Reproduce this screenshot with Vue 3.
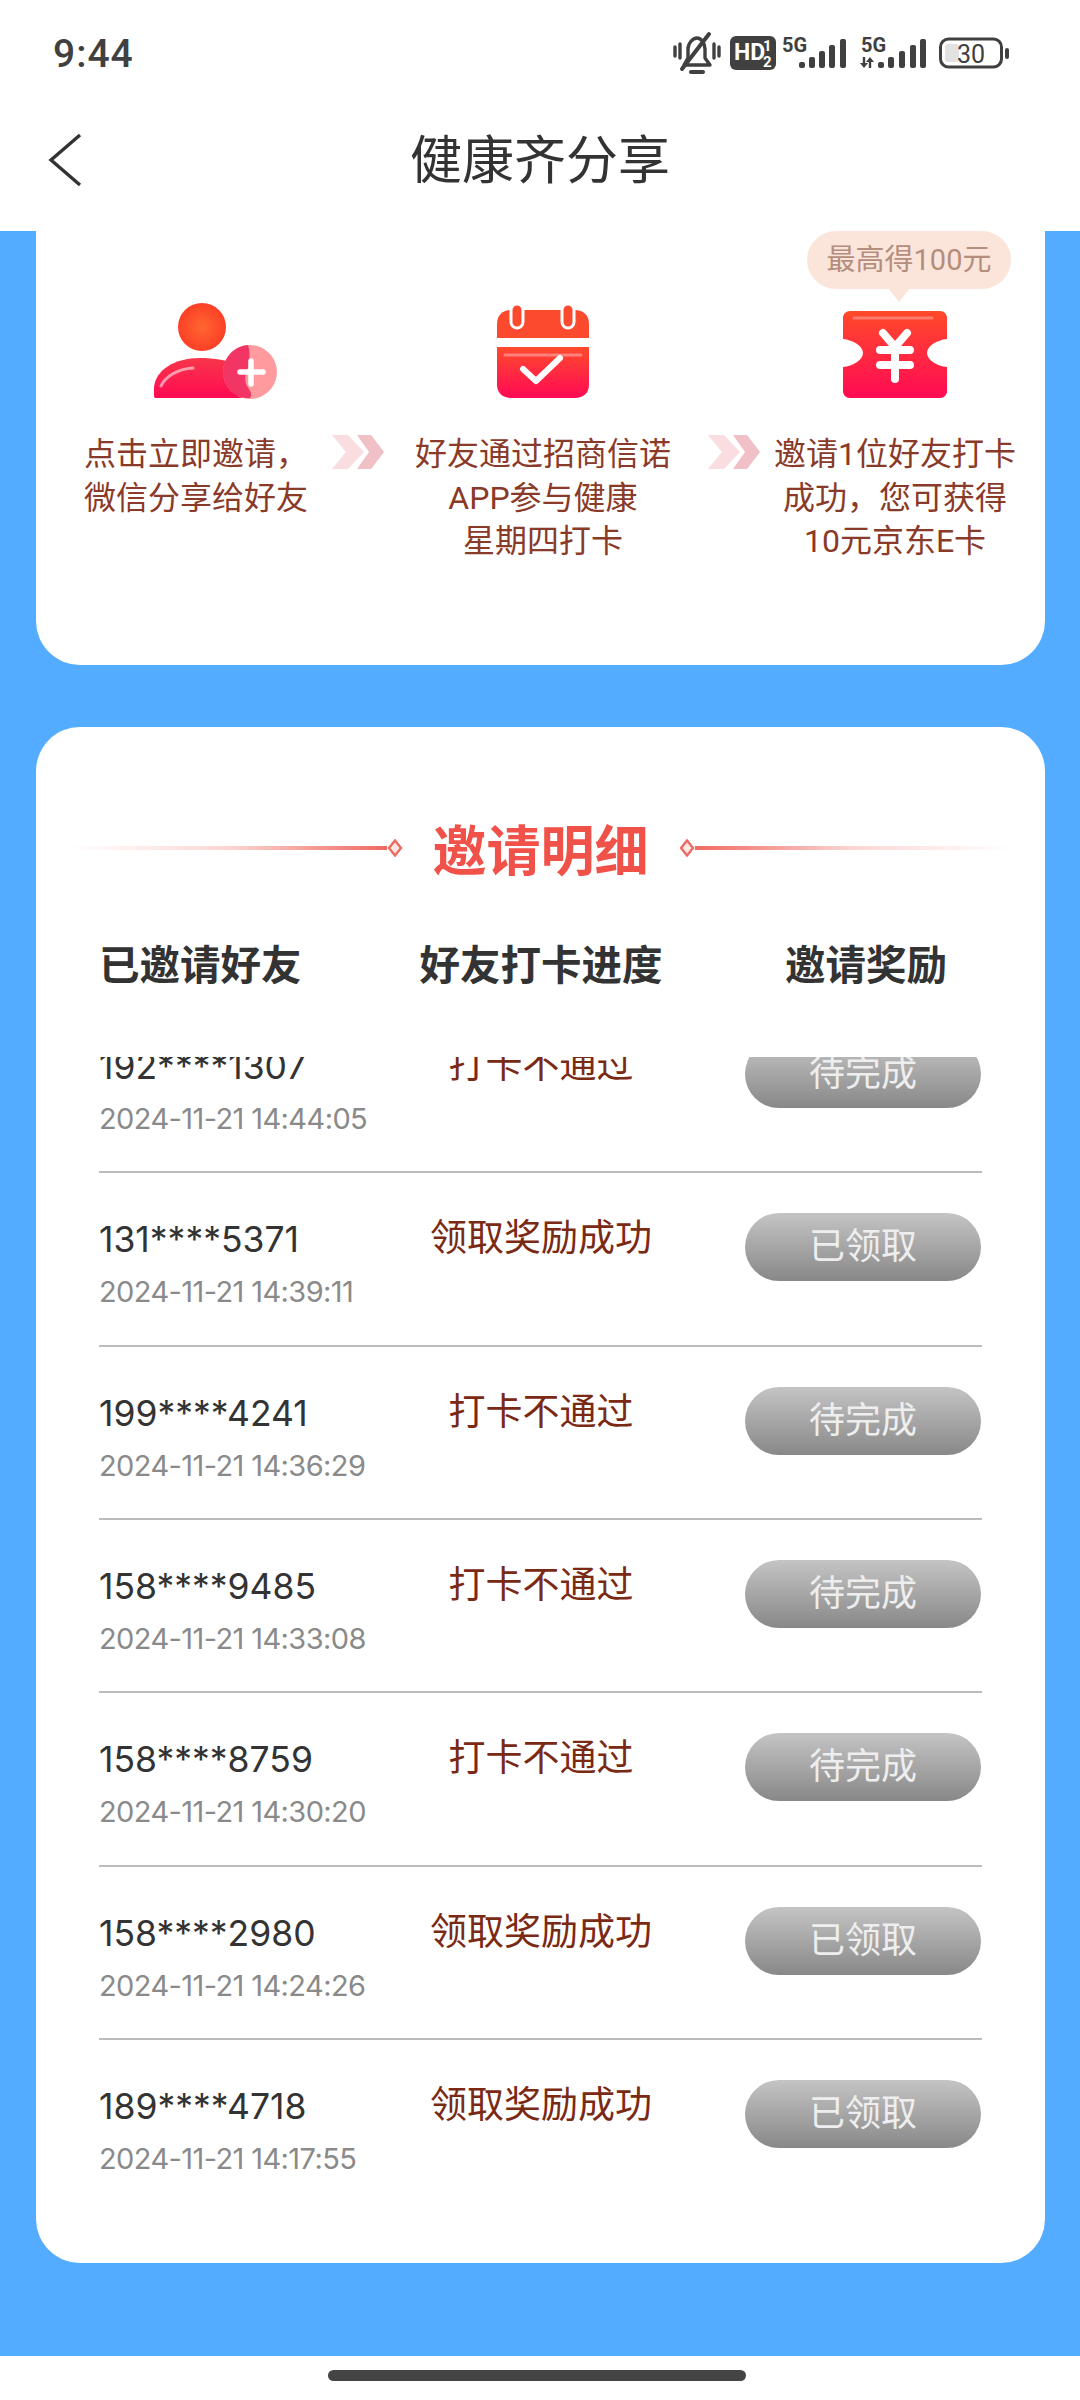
<script setup>
const steps = [
  { lines: ['点击立即邀请，', '微信分享给好友'] },
  { lines: ['好友通过招商信诺', 'APP参与健康', '星期四打卡'] },
  { lines: ['邀请1位好友打卡', '成功，您可获得', '10元京东E卡'] },
]

const fails = '打卡不通过'
const okay = '领取奖励成功'
const rows = [
  { phone: '192****1307', time: '2024-11-21 14:44:05', status: fails, btn: '待完成' },
  { phone: '131****5371', time: '2024-11-21 14:39:11', status: okay, btn: '已领取' },
  { phone: '199****4241', time: '2024-11-21 14:36:29', status: fails, btn: '待完成' },
  { phone: '158****9485', time: '2024-11-21 14:33:08', status: fails, btn: '待完成' },
  { phone: '158****8759', time: '2024-11-21 14:30:20', status: fails, btn: '待完成' },
  { phone: '158****2980', time: '2024-11-21 14:24:26', status: okay, btn: '已领取' },
  { phone: '189****4718', time: '2024-11-21 14:17:55', status: okay, btn: '已领取' },
]
</script>

<template>
  <div class="page">
    <div class="status-bar">
      <span class="clock">9:44</span>
      <svg class="status-icons" width="340" height="50" viewBox="0 0 340 50">
        <!-- muted bell -->
        <g fill="none" stroke="#404040" stroke-width="3.4" stroke-linecap="round" stroke-linejoin="round">
          <path d="M5 18v9M10 15v14M49 18v9M44 15v14" />
          <path d="M14 36h26l-5-7v-9c0-6-4-11-8-11s-9 5-9 11v9z" />
          <path d="M12 40L39 5" stroke-width="4" />
          <path d="M21 43h12" stroke-width="4" />
        </g>
        <!-- HD badge -->
        <rect x="60" y="7" width="46" height="34" rx="6" fill="#404040" />
        <text x="64" y="31" class="hd">HD</text>
        <text x="93" y="22" class="hd-small">1</text>
        <text x="93" y="38" class="hd-small">2</text>
        <!-- sim 1 -->
        <text x="112" y="23" class="five-g">5G</text>
        <g fill="#404040">
          <rect x="129" y="33" width="6" height="6" rx="2" />
          <rect x="139" y="28" width="6" height="11" rx="2" />
          <rect x="149" y="22" width="6" height="17" rx="2" />
          <rect x="159" y="16" width="6" height="23" rx="2" />
          <rect x="170" y="10" width="6" height="29" rx="2" />
        </g>
        <!-- sim 2 -->
        <text x="191" y="23" class="five-g">5G</text>
        <path d="M194 28v7M200 39v-7" fill="none" stroke="#404040" stroke-width="2.4" />
        <path d="M190 34h8l-4 5zM196 33h8l-4-5z" fill="#404040" />
        <g fill="#404040">
          <rect x="208" y="33" width="6" height="6" rx="2" />
          <rect x="218" y="28" width="6" height="11" rx="2" />
          <rect x="229" y="22" width="6" height="17" rx="2" />
          <rect x="240" y="16" width="6" height="23" rx="2" />
          <rect x="250" y="10" width="6" height="29" rx="2" />
        </g>
        <!-- battery -->
        <rect x="270.5" y="10" width="61" height="28" rx="8" fill="none" stroke="#404040" stroke-width="3" />
        <rect x="275" y="15" width="14" height="18" rx="3" fill="#e2e2e2" />
        <text x="301" y="34" text-anchor="middle" class="batt">30</text>
        <rect x="335" y="19" width="4" height="11" rx="2" fill="#404040" />
      </svg>
    </div>

    <div class="nav-bar">
      <svg class="back" width="34" height="54" viewBox="0 0 34 54">
        <path d="M32 2L3 27l29 25" fill="none" stroke="#333" stroke-width="3.4" />
      </svg>
      <span class="nav-title">健康齐分享</span>
    </div>

    <div class="main">
      <section class="card steps">
        <template v-for="(step, i) in steps" :key="i">
          <div class="step" :class="'step-' + i">
            <div v-if="i === 2" class="bubble">最高得100元</div>
            <svg v-if="i === 0" class="step-icon person" width="124" height="96" viewBox="0 0 124 96">
              <defs>
                <linearGradient id="redA" x1="0" y1="0" x2="0" y2="1">
                  <stop offset="0" stop-color="#f8364a" />
                  <stop offset="1" stop-color="#ff0a52" />
                </linearGradient>
                <radialGradient id="headA" cx=".5" cy=".5" r=".55">
                  <stop offset="0" stop-color="#ff6630" />
                  <stop offset="1" stop-color="#fb3c26" />
                </radialGradient>
              </defs>
              <circle cx="49" cy="24" r="24" fill="url(#headA)" />
              <path d="M3 95c-2 0-2-1-2-5v-6c2-17 20-29 46-29 14 0 28 2 40 8 6 8 12 22 14 32z" fill="url(#redA)" />
              <path d="M8 83c4-9 16-17 32-18" fill="none" stroke="#fff" stroke-opacity=".55" stroke-width="3" stroke-linecap="round" />
              <circle cx="97" cy="69" r="27" fill="#ff9a9e" />
              <path d="M95 42a27 27 0 0 0-16 47c4 4 10 6 18 6 3-4 0-7-3-12-3-6-2-12 1-18 2-6 2-18 0-23z" fill="#ef1c55" fill-opacity=".8" />
              <path d="M98 58v23M87 69h23" stroke="#fff" stroke-width="5.5" stroke-linecap="round" />
            </svg>
            <svg v-else-if="i === 1" class="step-icon" width="94" height="96" viewBox="0 0 94 96">
              <defs>
                <linearGradient id="redB" x1="0" y1="0" x2="0" y2="1">
                  <stop offset="0" stop-color="#ff4a2c" />
                  <stop offset="1" stop-color="#ff0a55" />
                </linearGradient>
              </defs>
              <path d="M1 35V21C1 12 7 7 15 7h64c8 0 14 5 14 14v14z" fill="#fb4a2e" />
              <path d="M1 44h92v38c0 8-6 13-14 13H15C7 95 1 90 1 82z" fill="url(#redB)" />
              <rect x="15" y="1" width="12" height="24" rx="6" fill="#fb4a2e" stroke="#fff" stroke-width="3" />
              <rect x="66" y="1" width="12" height="24" rx="6" fill="#fb4a2e" stroke="#fff" stroke-width="3" />
              <path d="M9 52h76" stroke="#fff" stroke-opacity=".35" stroke-width="3" stroke-linecap="round" />
              <path d="M27 66l13 12 24-23" fill="none" stroke="#fff" stroke-width="6" stroke-linecap="round" stroke-linejoin="round" />
            </svg>
            <svg v-else class="step-icon" width="106" height="96" viewBox="0 0 106 96">
              <defs>
                <linearGradient id="redC" x1="0" y1="0" x2="0" y2="1">
                  <stop offset="0" stop-color="#ff4a2a" />
                  <stop offset="1" stop-color="#ff0a55" />
                </linearGradient>
              </defs>
              <path d="M8 8h90c4 0 7 3 7 7v21c-10 1-20 7-20 14s10 13 20 14v24c0 4-3 7-7 7H8c-4 0-7-3-7-7V64c10-1 20-7 20-14S11 37 1 36V15c0-4 3-7 7-7z" fill="url(#redC)" />
              <path d="M12 15h78" stroke="#fff" stroke-opacity=".3" stroke-width="3" stroke-linecap="round" />
              <path d="M41 30l12 14 12-14M38 47h30M38 62h30M53 44v32" fill="none" stroke="#fff" stroke-width="8" stroke-linecap="round" stroke-linejoin="round" />
            </svg>
            <p class="step-text">
              <span v-for="line in step.lines" :key="line">{{ line }}</span>
            </p>
          </div>
          <svg v-if="i < 2" class="chev" width="52" height="34" viewBox="0 0 52 34">
            <path d="M0 0h16l16 17-16 17H0l14-17z" fill="#f9dde0" />
            <path d="M25 0h14l13 17-13 17H25l12-17z" fill="#f0c0c6" />
          </svg>
        </template>
      </section>

      <section class="card detail">
        <div class="detail-title">
          <span class="rule rule-left"></span>
          <svg class="diamond" width="16" height="18" viewBox="0 0 16 18">
            <path d="M8 1.5L14 9 8 16.5 2 9z" fill="#fde8e4" stroke="#ef6a60" stroke-width="2.4" />
          </svg>
          <h2>邀请明细</h2>
          <svg class="diamond" width="16" height="18" viewBox="0 0 16 18">
            <path d="M8 1.5L14 9 8 16.5 2 9z" fill="#fde8e4" stroke="#ef6a60" stroke-width="2.4" />
          </svg>
          <span class="rule rule-right"></span>
        </div>
        <div class="table-head">
          <span class="col-friend">已邀请好友</span>
          <span class="col-status">好友打卡进度</span>
          <span class="col-reward head-reward">邀请奖励</span>
        </div>
        <div class="list">
          <div class="list-inner">
            <div v-for="row in rows" :key="row.phone" class="row">
              <div class="col-friend">
                <div class="phone">{{ row.phone }}</div>
                <div class="time">{{ row.time }}</div>
              </div>
              <div class="col-status status">{{ row.status }}</div>
              <div class="col-reward">
                <button type="button" class="reward-btn">{{ row.btn }}</button>
              </div>
            </div>
          </div>
        </div>
      </section>
    </div>

    <div class="home-area">
      <div class="home-bar"></div>
    </div>
  </div>
</template>

<style>
html,
body {
  margin: 0;
  background: #fff;
}
</style>

<style scoped>
.page {
  width: 1080px;
  height: 2400px;
  display: flex;
  flex-direction: column;
  overflow: hidden;
  background: #fff;
  font-family: Roboto, "Noto Sans CJK SC", sans-serif;
  color: #333;
}

.status-bar {
  height: 107px;
  display: flex;
  align-items: center;
  justify-content: space-between;
  padding: 0 70px 0 53px;
  box-sizing: border-box;
}

.clock {
  font-size: 39px;
  font-weight: 500;
  letter-spacing: 1px;
  color: #404040;
}

.status-icons {
  display: block;
  font-family: Roboto, sans-serif;
}

.hd {
  font-size: 23px;
  font-weight: 700;
  fill: #fff;
}

.hd-small {
  font-size: 15px;
  font-weight: 700;
  fill: #fff;
}

.five-g {
  font-size: 20px;
  font-weight: 700;
  fill: #404040;
}

.batt {
  font-size: 25px;
  fill: #404040;
}

.nav-bar {
  height: 124px;
  position: relative;
  display: flex;
  align-items: center;
  justify-content: center;
}

.back {
  position: absolute;
  left: 48px;
  top: 26px;
}

.nav-title {
  font-size: 52px;
  color: #333;
  line-height: 1;
  margin-bottom: 15px;
}

.main {
  flex: 1;
  background: #53acff;
  padding: 0 35px 0 36px;
  display: flex;
  flex-direction: column;
  gap: 62px;
  min-height: 0;
}

.card {
  background: #fff;
  border-radius: 44px;
}

.steps {
  height: 434px;
  box-sizing: border-box;
  border-radius: 0 0 44px 44px;
  padding: 72px 0 0 24px;
  display: grid;
  grid-template-columns: 272px 52px 324px 52px 270px;
  align-items: start;
}

.step {
  position: relative;
  display: flex;
  flex-direction: column;
  align-items: center;
}

.step-1 {
  padding-right: 6px;
}

.step-icon {
  display: block;
  height: 96px;
}

.person {
  margin-left: 38px;
}

.step-text {
  margin: 34px 0 0;
  display: flex;
  flex-direction: column;
  align-items: center;
  font-size: 32px;
  line-height: 43.5px;
  color: #8a3a28;
  white-space: nowrap;
}

.chev {
  margin-top: 132px;
  display: block;
}

.bubble {
  position: absolute;
  top: -72px;
  left: 47px;
  width: 204px;
  height: 58px;
  border-radius: 29px;
  background: #fbe5da;
  color: #b58d7c;
  font-size: 29px;
  line-height: 58px;
  text-align: center;
  white-space: nowrap;
}

.bubble::after {
  content: "";
  position: absolute;
  left: 81px;
  bottom: -13px;
  border-left: 11px solid transparent;
  border-right: 11px solid transparent;
  border-top: 14px solid #fbe5da;
}

.detail {
  height: 1536px;
  box-sizing: border-box;
  padding-top: 96px;
  display: flex;
  flex-direction: column;
}

.detail-title {
  height: 60px;
  display: flex;
  align-items: center;
  justify-content: center;
  padding: 0 34px;
}

.detail-title h2 {
  margin: 0 30px;
  font-size: 54px;
  font-weight: 700;
  line-height: 60px;
  color: #f0524a;
  white-space: nowrap;
}

.rule {
  flex: 1;
  height: 4px;
  margin-top: -10px;
}

.rule-left {
  background: linear-gradient(90deg, rgba(240, 82, 74, 0), rgba(240, 120, 110, 0.3) 50%, #ef6a60);
}

.rule-right {
  background: linear-gradient(90deg, #ef6a60, rgba(240, 120, 110, 0.3) 50%, rgba(240, 82, 74, 0));
}

.diamond {
  display: block;
  margin-top: -10px;
  flex: none;
}

.table-head {
  display: flex;
  margin-top: 49px;
  padding: 0 63px;
  height: 60px;
  align-items: center;
  font-size: 40.5px;
  font-weight: 700;
  color: #333;
}

.col-friend {
  width: 283px;
  flex: none;
}

.col-status {
  width: 318px;
  flex: none;
  text-align: center;
}

.col-reward {
  flex: 1;
  text-align: center;
}

.head-reward {
  padding-left: 50px;
  white-space: nowrap;
}

.list {
  margin-top: 65px;
  flex: 1;
  min-height: 0;
  overflow: hidden;
}

.list-inner {
  margin-top: -57px;
  padding: 0 63px;
}

.row {
  height: 173.33px;
  box-sizing: border-box;
  display: flex;
  align-items: flex-start;
  padding-top: 40px;
  border-bottom: 2px solid #bcbcbc;
}

.row:last-child {
  border-bottom: 0;
}

.phone {
  font-family: Inter, "Noto Sans CJK SC", sans-serif;
  font-size: 35.5px;
  line-height: 52px;
  margin-top: 1px;
  color: #333;
}

.time {
  font-family: Inter, "Noto Sans CJK SC", sans-serif;
  margin-top: 8px;
  font-size: 29px;
  letter-spacing: -0.6px;
  line-height: 36px;
  color: #8a8a8a;
}

.status {
  font-size: 37px;
  line-height: 52px;
  color: #7a2a14;
}

.reward-btn {
  display: block;
  width: 236px;
  height: 68px;
  padding: 0;
  margin: 0 1px 0 auto;
  border: 0;
  border-radius: 34px;
  background: linear-gradient(180deg, #c4c4c4, #888);
  color: #eee;
  font-family: inherit;
  font-size: 36px;
  line-height: 68px;
}

.home-area {
  height: 44px;
  padding: 14px 0 0 328px;
  box-sizing: border-box;
  flex: none;
}

.home-bar {
  width: 418px;
  height: 11px;
  border-radius: 6px;
  background: #444;
}
</style>
